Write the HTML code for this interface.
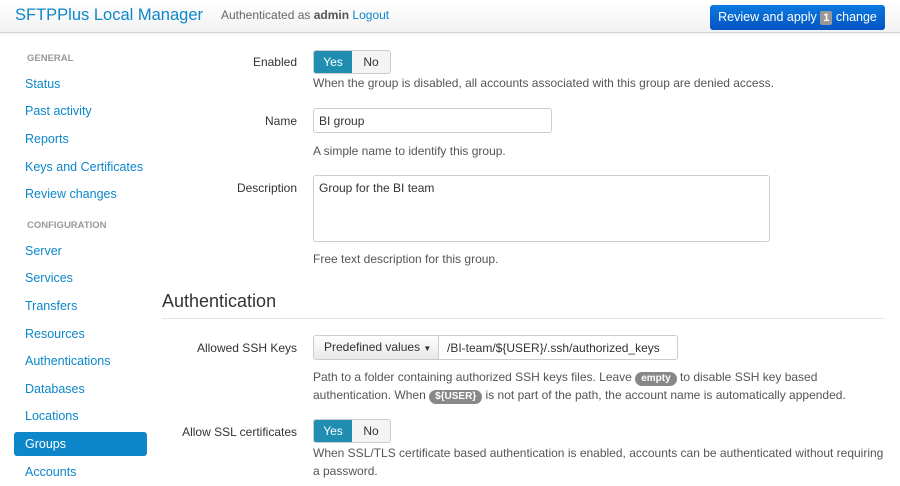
<!DOCTYPE html>
<html><head><style>
*{box-sizing:border-box;margin:0;padding:0}
body{width:900px;height:486px;overflow:hidden;background:#fff;font-family:"Liberation Sans",sans-serif;font-size:12px;color:#333;position:relative}
.hdr{position:absolute;left:0;top:0;width:900px;height:33px;background:linear-gradient(#fff,#f2f2f2);border-bottom:1px solid #d4d4d4;box-shadow:0 1px 3px rgba(0,0,0,.08)}
.brand{position:absolute;left:15px;top:6px;font-size:16.5px;color:#0c87c9;white-space:nowrap}
.auth{position:absolute;left:221px;top:8px;font-size:12px;color:#666;white-space:nowrap}
.auth b{color:#555}.auth a{color:#0c87c9}
.rev{position:absolute;left:710px;top:5px;width:175px;height:25px;background:linear-gradient(#0a7ae0,#0553c2);border-radius:3px;color:#fff;font-size:12.5px;text-align:center;line-height:25px;white-space:nowrap}
.badge{display:inline-block;background:#999;border-radius:2px;padding:0 3px;line-height:14px;font-weight:bold;font-size:11px}
.sh{position:absolute;left:27px;font-size:9.5px;font-weight:bold;color:#999}
.sl{position:absolute;left:25px;color:#0c87c9;font-size:12.5px;white-space:nowrap}
.act{position:absolute;left:14px;top:432px;width:133px;height:24px;background:#0d87c9;border-radius:3px}
.lbl{position:absolute;right:603px;color:#333;font-size:12px;white-space:nowrap}
.tog{position:absolute;left:313px;width:78px;height:24px;border:1px solid #ccc;border-radius:3px;background:#f4f4f4;display:flex}
.tog span{flex:1;text-align:center;line-height:22px}
.tog .y{background:#1f8eb0;color:#fff;border-radius:2px 0 0 2px}
.help{position:absolute;left:313px;color:#555;font-size:12px;line-height:18px;white-space:nowrap}
.inp{position:absolute;left:313px;border:1px solid #ccc;border-radius:3px;padding:5px;font-size:12px;color:#333;white-space:nowrap}
.pill{display:inline-block;background:#888;color:#fff;border-radius:8px;padding:0 6px;font-size:10px;font-weight:bold;line-height:14px}
</style></head><body>
<div class="hdr">
<div class="brand">SFTPPlus Local Manager</div>
<div class="auth">Authenticated as <b>admin</b> <a>Logout</a></div>
<div class="rev">Review and apply <span class="badge">1</span> change</div>
</div>
<div class="sh" style="top:53px">GENERAL</div>
<div class="sl" style="top:77px">Status</div>
<div class="sl" style="top:104px">Past activity</div>
<div class="sl" style="top:132px">Reports</div>
<div class="sl" style="top:160px">Keys and Certificates</div>
<div class="sl" style="top:187px">Review changes</div>
<div class="sh" style="top:220px">CONFIGURATION</div>
<div class="sl" style="top:244px">Server</div>
<div class="sl" style="top:271px">Services</div>
<div class="sl" style="top:299px">Transfers</div>
<div class="sl" style="top:327px">Resources</div>
<div class="sl" style="top:354px">Authentications</div>
<div class="sl" style="top:382px">Databases</div>
<div class="sl" style="top:409px">Locations</div>
<div class="act"></div>
<div class="sl" style="top:437px;color:#fff">Groups</div>
<div class="sl" style="top:465px">Accounts</div>

<div class="lbl" style="top:55px">Enabled</div>
<div class="tog" style="top:50px"><span class="y">Yes</span><span>No</span></div>
<div class="help" style="top:74px">When the group is disabled, all accounts associated with this group are denied access.</div>
<div class="lbl" style="top:114px">Name</div>
<div class="inp" style="top:108px;width:239px;height:25px">BI group</div>
<div class="help" style="top:142px">A simple name to identify this group.</div>
<div class="lbl" style="top:181px">Description</div>
<div class="inp" style="top:175px;width:457px;height:67px">Group for the BI team</div>
<div class="help" style="top:250px">Free text description for this group.</div>
<div style="position:absolute;left:162px;top:291px;font-size:18px;color:#333">Authentication</div>
<div style="position:absolute;left:162px;top:318px;width:723px;border-top:1px solid #e5e5e5"></div>
<div class="lbl" style="top:341px">Allowed SSH Keys</div>
<div style="position:absolute;left:313px;top:335px;width:126px;height:25px;border:1px solid #ccc;border-radius:3px 0 0 3px;background:linear-gradient(#fff,#e8e8e8);line-height:23px;padding-left:10px;white-space:nowrap">Predefined values <span style="font-size:8px">▼</span></div>
<div class="inp" style="top:335px;left:438px;width:240px;height:25px;border-radius:0 3px 3px 0;padding-left:8px">/BI-team/${USER}/.ssh/authorized_keys</div>
<div class="help" style="top:368px">Path to a folder containing authorized SSH keys files. Leave <span class="pill">empty</span> to disable SSH key based<br>authentication. When <span class="pill">${USER}</span> is not part of the path, the account name is automatically appended.</div>
<div class="lbl" style="top:425px">Allow SSL certificates</div>
<div class="tog" style="top:419px"><span class="y">Yes</span><span>No</span></div>
<div class="help" style="top:444px">When SSL/TLS certificate based authentication is enabled, accounts can be authenticated without requiring<br>a password.</div>
</body></html>
